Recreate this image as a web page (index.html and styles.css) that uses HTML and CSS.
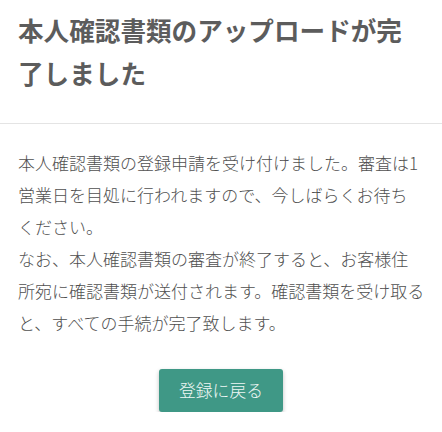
FILE: index.html
```html
<!DOCTYPE html>
<html lang="ja">
<head>
<meta charset="utf-8">
<title>本人確認書類のアップロードが完了しました</title>
<link rel="stylesheet" href="styles.css">
</head>
<body>
<header class="page-head">
  <h1 class="title">本人確認書類のアップロードが完了しました</h1>
</header>
<main class="content">
  <p class="message">本人確認書類の登録申請を受け付けました。審査は1営業日を目処に行われますので、今しばらくお待ち<span class="nobr">ください。</span><br>なお、本人確認書類の審査が終了すると、お客様住<span class="nobr">所宛に</span>確認書類が送付されます。確認書類を受け取ると、すべての手続が完了致します。</p>
  <div class="actions">
    <a class="btn" href="#">登録に戻る</a>
  </div>
</main>
</body>
</html>
```
FILE: styles.css
```css
html, body {
  margin: 0;
  padding: 0;
  background: #ffffff;
}
body {
  font-family: "Noto Sans CJK JP", "Noto Sans", sans-serif;
  color: #555555;
}
.page-head {
  padding: 8px 18px 29px;
  border-bottom: 1px solid #e4e4e4;
}
.title {
  margin: 0;
  font-size: 25.6px;
  line-height: 43px;
  font-weight: 700;
  color: #5c5c5c;
}
.content {
  padding: 23px 15px 0 18px;
}
.message {
  margin: 0;
  font-size: 17px;
  line-height: 32px;
  font-weight: 300;
  color: #505050;
}
.nobr {
  white-space: nowrap;
}
.actions {
  display: flex;
  justify-content: center;
  padding: 30px 0 0 0;
  margin-left: -3px;
}
.btn {
  display: block;
  padding: 0 20px;
  height: 43px;
  line-height: 43px;
  font-size: 16.8px;
  font-weight: 300;
  color: #eef7f5;
  background: #3f9886;
  border-radius: 3px;
  text-decoration: none;
  box-shadow: 0 2px 4px rgba(0, 0, 0, 0.25);
}
```
